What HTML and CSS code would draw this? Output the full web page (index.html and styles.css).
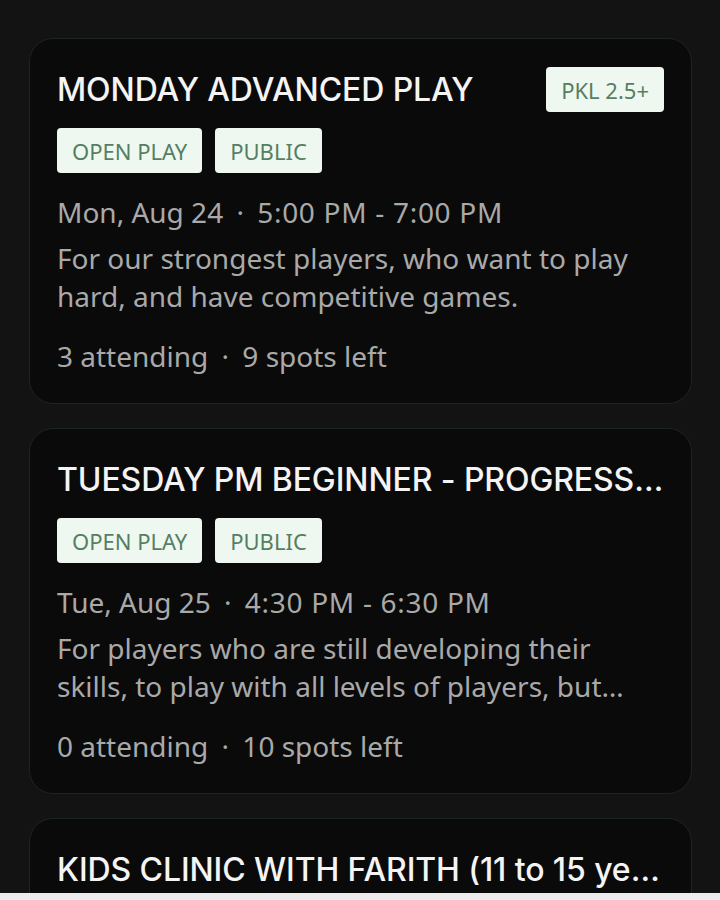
FILE: index.html
```html
<!DOCTYPE html>
<html lang="en">
<head>
<meta charset="utf-8">
<title>Sessions</title>
<link rel="stylesheet" href="styles.css">
</head>
<body>
<div class="screen">
  <main class="list">
    <article class="card">
      <div class="card-head">
        <h2 class="title">MONDAY ADVANCED PLAY</h2>
        <span class="badge">PKL 2.5+</span>
      </div>
      <div class="tags">
        <span class="badge">OPEN PLAY</span>
        <span class="badge">PUBLIC</span>
      </div>
      <p class="when">Mon, Aug 24 <span class="dot">·</span> <span class="time">5:00 PM - 7:00 PM</span></p>
      <p class="desc">For our strongest players, who want to play hard, and have competitive games.</p>
      <p class="stats">3 attending <span class="dot">·</span> 9 spots left</p>
    </article>
    <article class="card">
      <div class="card-head">
        <h2 class="title">TUESDAY PM BEGINNER - PROGRESSIVE PLAY</h2>
      </div>
      <div class="tags">
        <span class="badge">OPEN PLAY</span>
        <span class="badge">PUBLIC</span>
      </div>
      <p class="when">Tue, Aug 25 <span class="dot">·</span> <span class="time">4:30 PM - 6:30 PM</span></p>
      <p class="desc">For players who are still developing their skills, to play with all levels of players, but focused on learning.</p>
      <p class="stats">0 attending <span class="dot">·</span> 10 spots left</p>
    </article>
    <article class="card">
      <div class="card-head">
        <h2 class="title">KIDS CLINIC WITH FARITH (11 to 15 years old)</h2>
      </div>
      <div class="tags">
        <span class="badge">CLINIC</span>
        <span class="badge">PUBLIC</span>
      </div>
    </article>
  </main>
  <div class="bottom-bar"></div>
</div>
</body>
</html>
```
FILE: styles.css
```css
* { box-sizing: border-box; }
html, body { margin: 0; padding: 0; }
body {
  background: #131313;
  font-family: "Noto Sans", Roboto, sans-serif;
}
.screen {
  height: 900px;
  display: flex;
  flex-direction: column;
  overflow: hidden;
}
.list {
  flex: 1;
  overflow: hidden;
  padding: 38px 28px 0 29px;
  display: flex;
  flex-direction: column;
  gap: 24px;
}
.card {
  flex: none;
  background: #0a0a0a;
  border: 1px solid #1d2424;
  border-radius: 24px;
  padding: 28px 27px 24px 27px;
  min-height: 366px;
}
.card-head {
  display: flex;
  align-items: center;
  justify-content: space-between;
  gap: 16px;
  min-height: 45px;
}
.title {
  margin: 0;
  font-family: Inter, Lato, sans-serif;
  font-weight: 500;
  font-size: 32px;
  line-height: 40px;
  color: #f4f4f4;
  white-space: nowrap;
  overflow: hidden;
  text-overflow: ellipsis;
  letter-spacing: -0.1px;
}
.badge {
  flex: none;
  display: inline-flex;
  align-items: center;
  height: 45px;
  padding: 0 15px;
  background: #eef8f0;
  color: #557e62;
  border-radius: 4px;
  font-size: 22px;
}
.tags {
  display: flex;
  gap: 13px;
  margin-top: 16px;
}
.when, .desc, .stats {
  margin: 0;
  color: #a9a9a9;
  font-size: 28px;
  line-height: 38px;
}
.when { margin-top: 20px; }
.time { letter-spacing: 0.7px; }
.desc {
  margin-top: 8px;
  display: -webkit-box;
  -webkit-line-clamp: 2;
  -webkit-box-orient: vertical;
  overflow: hidden;
}
.stats { margin-top: 22px; }
.dot { padding: 0 6px; }
.bottom-bar {
  flex: none;
  height: 7px;
  background: #ececec;
}
```
